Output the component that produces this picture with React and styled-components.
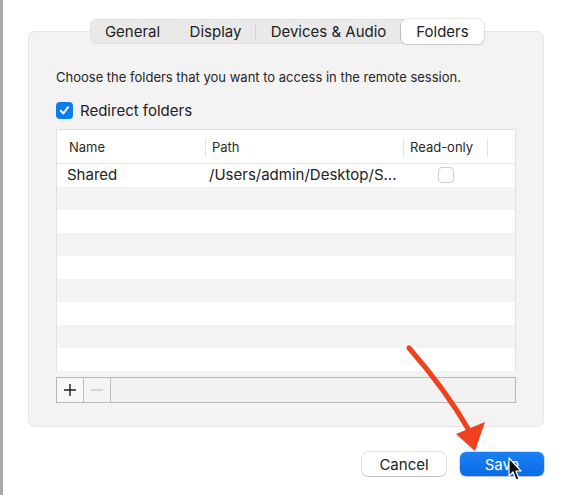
import styled, { createGlobalStyle } from 'styled-components';

const GlobalStyle = createGlobalStyle`
  body {
    margin: 0;
    background: #fff;
    font-family: Inter, "Liberation Sans", Arial, sans-serif;
    color: #262626;
  }
`;

const tabs = ['General', 'Display', 'Devices & Audio', 'Folders'];
const tabWidths = [85, 81, 145, 83];
const emptyRows = 8;

const App = () => {
  return (
    <>
      <GlobalStyle />
      <Window>
        <TabBar>
          {tabs.map((t, i) => (
            <Tab key={t} $w={tabWidths[i]} $active={t === 'Folders'} $sep={i > 0 && i < 3}>
              {t}
            </Tab>
          ))}
        </TabBar>
        <Panel>
          <Hint>Choose the folders that you want to access in the remote session.</Hint>
          <CheckRow>
            <BlueCheck>
              <svg width="11" height="11" viewBox="0 0 11 11">
                <path d="M1.8 5.8 L4.4 8.4 L9.2 2.2" fill="none" stroke="#fff" strokeWidth="2" strokeLinecap="round" strokeLinejoin="round" />
              </svg>
            </BlueCheck>
            Redirect folders
          </CheckRow>
          <Table>
            <HeadRow>
              <HeadCell $w={148} $pad={12}>Name</HeadCell>
              <HeadCell $w={198} $pad={7} $sep>Path</HeadCell>
              <HeadCell $w={84} $pad={7} $sep>Read-only</HeadCell>
              <HeadCell $sep />
            </HeadRow>
            <Row>
              <Cell $w={148} $pad={10}>Shared</Cell>
              <Cell $w={198} $pad={4}>/Users/admin/Desktop/S...</Cell>
              <Cell $w={84} $center>
                <EmptyBox />
              </Cell>
            </Row>
            {Array.from({ length: emptyRows }).map((_, i) => (
              <Row key={i} $alt={i % 2 === 0} />
            ))}
          </Table>
          <Toolbar>
            <ToolBtn>
              <svg width="14" height="14" viewBox="0 0 14 14">
                <path d="M7 1v12M1 7h12" stroke="#1e1e1e" strokeWidth="1.4" />
              </svg>
            </ToolBtn>
            <ToolBtn $disabled>
              <svg width="14" height="14" viewBox="0 0 14 14">
                <path d="M1 7h12" stroke="#c4c4c4" strokeWidth="1.2" />
              </svg>
            </ToolBtn>
          </Toolbar>
        </Panel>
        <Footer>
          <Button>Cancel</Button>
          <Button $primary>Save</Button>
        </Footer>
        <Overlay width="567" height="495" viewBox="0 0 567 495">
          <path d="M409 348 Q446 390 470 432" fill="none" stroke="#f1401d" strokeWidth="5" strokeLinecap="round" />
          <polygon points="456,434 485,422 475,451" fill="#f1401d" />
          <path
            d="M509 458 L509 476 L513 472 L516 480 L519 479 L516 471 L521 471 Z"
            fill="#111"
            stroke="#fff"
            strokeWidth="1.2"
            strokeLinejoin="round"
          />
        </Overlay>
      </Window>
    </>
  );
};

export default App;

const Window = styled.div`
  position: relative;
  width: 567px;
  height: 495px;
  box-sizing: border-box;
  border-left: 3px solid #a9a9a9;
  padding: 19px 23px 0 25px;
  overflow: hidden;
`;

const TabBar = styled.div`
  position: relative;
  z-index: 1;
  display: flex;
  width: fit-content;
  height: 25px;
  margin: 0 0 -13px 62px;
  background: #e9e9e9;
  border-radius: 6px;
  box-shadow: inset 0 0 0 0.5px #d8d8d8;
`;

const Tab = styled.div`
  position: relative;
  display: flex;
  align-items: center;
  justify-content: center;
  width: ${p => p.$w}px;
  font-size: 15px;
  color: #222;
  border-radius: 6px;
  background: ${p => (p.$active ? '#fff' : 'transparent')};
  box-shadow: ${p => (p.$active ? '0 0 0 0.5px rgba(0,0,0,0.15), 0 1px 2px rgba(0,0,0,0.12)' : 'none')};
  &::after {
    content: '';
    display: ${p => (p.$sep ? 'block' : 'none')};
    position: absolute;
    right: 0;
    top: 6px;
    width: 1px;
    height: 14px;
    background: #cfcfcf;
  }
`;

const Panel = styled.div`
  width: 516px;
  height: 396px;
  box-sizing: border-box;
  padding: 37px 27px 0;
  background: #f3f3f3;
  border: 1px solid #e6e6e6;
  border-radius: 7px;
`;

const Hint = styled.div`
  font-size: 13px;
  line-height: 16px;
  color: #262626;
`;

const CheckRow = styled.div`
  display: flex;
  align-items: center;
  gap: 7px;
  height: 17px;
  margin-top: 17px;
  font-size: 15px;
  line-height: 17px;
  color: #222;
`;

const BlueCheck = styled.span`
  display: flex;
  align-items: center;
  justify-content: center;
  width: 17px;
  height: 17px;
  border-radius: 4px;
  background: #0a7cf2;
`;

const Table = styled.div`
  margin-top: 10px;
  background: #fff;
  border: 1px solid #e0e0e0;
  border-bottom: none;
`;

const HeadRow = styled.div`
  display: flex;
  height: 33px;
  border-bottom: 1px solid #e6e6e6;
`;

const HeadCell = styled.div`
  position: relative;
  display: flex;
  align-items: center;
  width: ${p => (p.$w ? `${p.$w}px` : 'auto')};
  padding-left: ${p => p.$pad || 0}px;
  box-sizing: border-box;
  font-size: 13px;
  color: #2a2a2a;
  &::before {
    content: '';
    display: ${p => (p.$sep ? 'block' : 'none')};
    position: absolute;
    left: 0;
    top: 8px;
    width: 1px;
    height: 19px;
    background: #e3e3e3;
  }
`;

const Row = styled.div`
  display: flex;
  height: 23px;
  background: ${p => (p.$alt ? '#f3f3f3' : '#fff')};
`;

const Cell = styled.div`
  display: flex;
  align-items: center;
  justify-content: ${p => (p.$center ? 'center' : 'flex-start')};
  width: ${p => p.$w}px;
  padding-left: ${p => p.$pad || 0}px;
  box-sizing: border-box;
  font-size: 15px;
  color: #222;
  white-space: nowrap;
  padding-bottom: 2px;
`;

const EmptyBox = styled.span`
  width: 14px;
  height: 14px;
  border-radius: 4px;
  background: #fff;
  border: 1px solid #cfcfcf;
  margin-left: 2px;
`;

const Toolbar = styled.div`
  display: flex;
  height: 26px;
  margin-top: 6px;
  box-sizing: border-box;
  border: 1px solid #b9b9b9;
  background: #f1f1f1;
`;

const ToolBtn = styled.div`
  display: flex;
  align-items: center;
  justify-content: center;
  width: 26px;
  border-right: 1px solid #bcbcbc;
  background: ${p => (p.$disabled ? '#f4f4f4' : '#f7f7f7')};
`;

const Footer = styled.div`
  display: flex;
  justify-content: flex-end;
  gap: 14px;
  margin-top: 25px;
`;

const Button = styled.div`
  display: flex;
  align-items: center;
  justify-content: center;
  width: 84px;
  height: 24px;
  border-radius: 6px;
  font-size: 15px;
  color: ${p => (p.$primary ? '#fff' : '#222')};
  background: ${p => (p.$primary ? 'linear-gradient(#1a80f5, #0a6be4)' : '#fff')};
  box-shadow: ${p =>
    p.$primary
      ? '0 0 0 0.5px rgba(0,80,200,0.4), 0 1px 1px rgba(0,0,0,0.12)'
      : '0 0 0 0.5px rgba(0,0,0,0.22), 0 1px 1px rgba(0,0,0,0.14)'};
`;

const Overlay = styled.svg`
  position: absolute;
  left: -3px;
  top: 0;
  pointer-events: none;
`;
